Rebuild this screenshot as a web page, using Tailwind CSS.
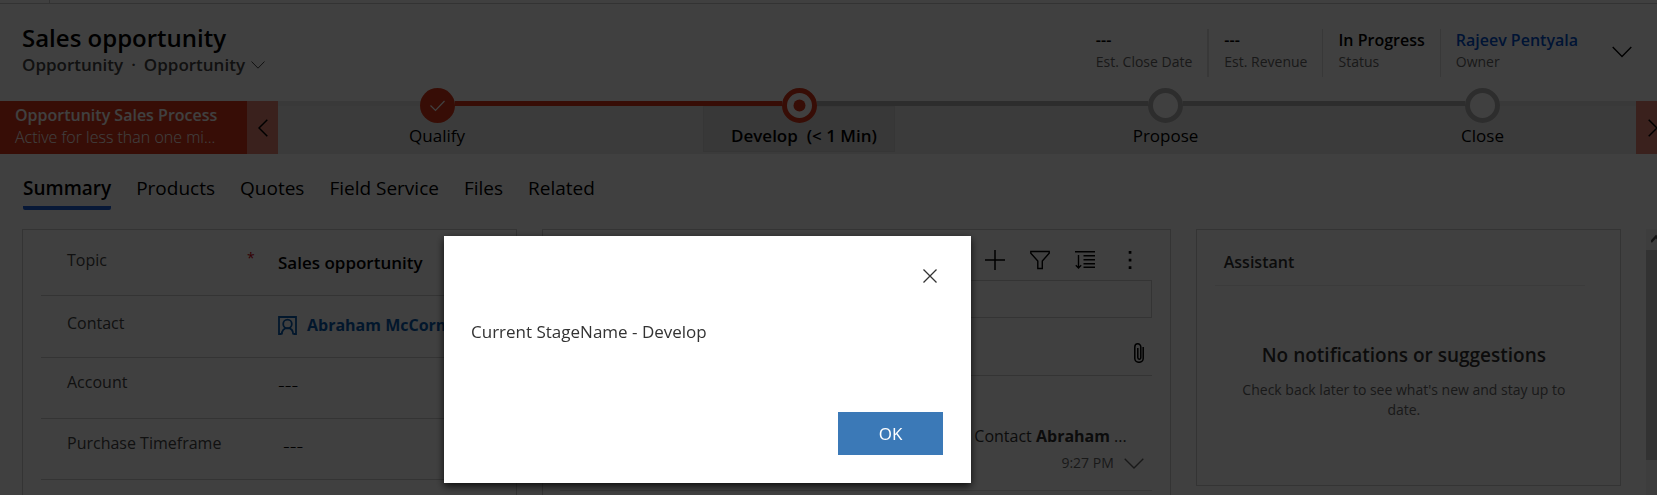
<!DOCTYPE html>
<html lang="en">
<head>
<meta charset="utf-8">
<title>Sales opportunity</title>
<script src="https://cdn.jsdelivr.net/npm/@tailwindcss/browser@4"></script>
</head>
<body class="h-screen overflow-hidden bg-white font-['Open_Sans','Noto_Sans',sans-serif] text-base text-black">
<div class="flex h-full flex-col overflow-hidden">
  <div class="h-1 shrink-0 border-b border-[#cccccc]"><div class="h-full w-[50px] border-r border-[#cccccc]"></div></div>

  <header class="flex h-[97px] shrink-0 items-start justify-between pl-[22px] pr-[25px]">
    <div class="pt-4">
      <h1 class="text-2xl/9 font-semibold">Sales opportunity</h1>
      <div class="flex items-center text-[17px]/[18px] font-semibold text-[#444444]">
        <span>Opportunity</span><span class="px-2">·</span>
        <button type="button" class="flex items-center gap-[6px] font-semibold">Opportunity
          <svg class="h-2 w-[14px]" viewBox="0 0 14 8" fill="none" stroke="currentColor"><path d="M.5.5 7 7.2 13.5.5"/></svg>
        </button>
      </div>
    </div>
    <div class="flex pt-[25px]">
      <dl class="flex h-12">
        <div class="flex flex-col-reverse justify-end border-r-2 border-[#dddddd] pr-[15px]"><dt class="text-sm/[22px] text-[#666666]">Est. Close Date</dt><dd class="text-base/[22px] font-semibold">---</dd></div>
        <div class="flex flex-col-reverse justify-end border-r border-[#dddddd] px-[15px]"><dt class="text-sm/[22px] text-[#666666]">Est. Revenue</dt><dd class="text-base/[22px] font-semibold">---</dd></div>
        <div class="flex flex-col-reverse justify-end border-r border-[#dddddd] px-[15px]"><dt class="text-sm/[22px] text-[#666666]">Status</dt><dd class="text-base/[22px] font-semibold">In Progress</dd></div>
        <div class="flex flex-col-reverse justify-end pl-[15px]"><dt class="text-sm/[22px] text-[#666666]">Owner</dt><dd class="text-base/[22px] font-semibold"><a href="#" class="text-[#0050d0]">Rajeev Pentyala</a></dd></div>
      </dl>
      <button type="button" aria-label="Expand header" class="ml-[34px] mt-[13px] h-5">
        <svg class="h-3 w-5" viewBox="0 0 20 12" fill="none" stroke="currentColor" stroke-width="1.4"><path d="M.7 1 10 10.5 19.3 1"/></svg>
      </button>
    </div>
  </header>

  <section class="flex h-[53px] shrink-0 bg-[#ececec]" aria-label="Business process">
    <div class="w-[247px] shrink-0 bg-[#dc3618] pl-[15px] text-[#ffffff]">
      <div class="whitespace-nowrap pt-[2px] text-base/6 font-semibold">Opportunity Sales Process</div>
      <div class="text-base/5 font-light">Active for less than one mi...</div>
    </div>
    <button type="button" aria-label="Previous stage" class="flex w-[31px] shrink-0 items-center justify-center bg-[#e88474]">
      <svg class="h-[18px] w-[10px]" viewBox="0 0 10 18" fill="none" stroke="currentColor" stroke-width="1.5"><path d="M9.3.7 1 9l8.3 8.3"/></svg>
    </button>
    <ol class="grid flex-1 grid-cols-[318fr_406fr_327fr_307fr] text-[17px]/6">
      <li class="flex flex-col items-center">
        <div class="flex h-[5px] w-full items-center"><div class="h-[5px] flex-1 bg-[#e4e4e4]"></div>
          <svg class="mt-1 size-[35px] shrink-0" viewBox="0 0 35 35"><circle cx="17.500" cy="17.500" r="17.500" fill="#dc3618"/><path d="m10.500 17.500 5 5 9-9.500" fill="none" stroke="#fff" stroke-width="1.200"/></svg>
          <div class="h-[5px] flex-1 bg-[#dc3618]"></div></div>
        <div class="pt-[18px]">Qualify</div>
      </li>
      <li class="flex flex-col items-center">
        <div class="z-10 flex h-[5px] w-full items-center"><div class="h-[5px] flex-1 bg-[#dc3618]"></div>
          <svg class="mt-1 size-[35px] shrink-0" viewBox="0 0 35 35"><circle cx="17.500" cy="17.500" r="15" fill="#fff" stroke="#dc3618" stroke-width="5"/><circle cx="17.500" cy="17.500" r="6" fill="#dc3618"/></svg>
          <div class="h-[5px] flex-1 bg-[#b4b4b4]"></div></div>
        <div class="h-[46px] w-[192px] border border-[#d8d8d8] bg-[#e0e0e0] pl-[27px] pt-[17px] font-semibold whitespace-pre">Develop  (&lt; 1 Min)</div>
      </li>
      <li class="flex flex-col items-center">
        <div class="flex h-[5px] w-full items-center"><div class="h-[5px] flex-1 bg-[#b4b4b4]"></div>
          <svg class="mt-1 size-[35px] shrink-0" viewBox="0 0 35 35"><circle cx="17.500" cy="17.500" r="15" fill="#fff" stroke="#b4b4b4" stroke-width="5"/></svg>
          <div class="h-[5px] flex-1 bg-[#b4b4b4]"></div></div>
        <div class="pt-[18px]">Propose</div>
      </li>
      <li class="flex flex-col items-center">
        <div class="flex h-[5px] w-full items-center"><div class="h-[5px] flex-1 bg-[#b4b4b4]"></div>
          <svg class="mt-1 size-[35px] shrink-0" viewBox="0 0 35 35"><circle cx="17.500" cy="17.500" r="15" fill="#fff" stroke="#b4b4b4" stroke-width="5"/></svg>
          <div class="h-[5px] flex-1 bg-[#e4e4e4]"></div></div>
        <div class="pt-[18px]">Close</div>
      </li>
    </ol>
    <button type="button" aria-label="Next stage" class="flex w-[21px] shrink-0 items-center bg-[#e88474] pl-3">
      <svg class="h-[18px] w-[10px] shrink-0" viewBox="0 0 10 18" fill="none" stroke="currentColor" stroke-width="1.5"><path d="M.7.7 9 9 .7 17.300"/></svg>
    </button>
  </section>

  <nav class="flex h-[75px] shrink-0 items-start gap-[25px] pl-[23px] pt-[18px] text-[19px]/8">
    <a href="#" class="h-[38px] rounded-b-[2px] border-b-4 border-[#1e5fdc] font-semibold">Summary</a>
    <a href="#">Products</a><a href="#">Quotes</a><a href="#">Field Service</a><a href="#">Files</a><a href="#">Related</a>
  </nav>

  <main class="flex min-h-0 flex-1 items-start pl-[22px]">
    <div class="grid h-full flex-1 grid-cols-[495fr_628fr_425fr] gap-[25px] pr-[25px]">
      <section class="h-[300px] border border-[#cfcfcf] pl-[18px]">
        <div class="flex h-[66px] border-b border-[#cfcfcf] pl-[26px] pt-[18px] text-base/6"><span class="w-[180px] text-[#444444]">Topic</span><span class="w-[31px] text-sm/5 text-[#d00010]">*</span><span class="pt-[3px] text-[17px] font-semibold">Sales opportunity</span></div>
        <div class="flex h-[62px] items-start border-b border-[#cfcfcf] pl-[26px] pt-[15px] text-base/6"><span class="w-[211px] text-[#444444]">Contact</span>
          <a href="#" class="flex items-center gap-[10px] whitespace-nowrap pt-[2px] font-bold text-[#0b5cb0]">
            <svg class="size-[19px]" viewBox="0 0 19 19" fill="none" stroke="currentColor" stroke-width="1.800"><path d="M3.500 18H1V1h17v17h-2.500"/><circle cx="9.500" cy="8" r="4.300"/><path d="M3.800 18.500c0-4 2-6.300 5.700-6.300s5.700 2.300 5.700 6.300"/></svg>Abraham McCormick</a></div>
        <div class="flex h-[61px] border-b border-[#cfcfcf] pl-[26px] pt-3 text-base/6"><span class="w-[211px] text-[#444444]">Account</span><span class="pt-[2px] text-[21px] font-light">---</span></div>
        <div class="flex h-[61px] border-b border-[#cfcfcf] pl-[26px] pt-3 text-base/6"><span class="w-[216px] text-[#444444]">Purchase Timeframe</span><span class="pt-[2px] text-[21px] font-light">---</span></div>
      </section>

      <section class="h-[300px] border border-[#cfcfcf] pl-[17px] pr-[18px] pt-5">
        <div class="flex items-center justify-end gap-[25px]">
          <button type="button" aria-label="Add"><svg class="size-5" viewBox="0 0 20 20" stroke="currentColor" stroke-width="1.500"><path d="M10 0v20M0 10h20"/></svg></button>
          <button type="button" aria-label="Filter"><svg class="size-5" viewBox="0 0 20 20" fill="none" stroke="currentColor" stroke-width="1.400"><path d="M.800 1.500h18.400v1.700L12.300 11v7.500H7.800V11L.800 3.200z"/></svg></button>
          <button type="button" aria-label="Sort"><svg class="size-5" viewBox="0 0 20 20" fill="none" stroke="currentColor" stroke-width="1.400"><path d="M0 1.800h20M8.500 5.800H20M8.500 9.800H20M8.500 13.800H20M8.500 17.300H20M3.500 5v13M.800 15.300l2.700 2.700 2.700-2.700"/></svg></button>
          <button type="button" aria-label="More" class="mr-3"><svg class="size-5" viewBox="0 0 20 20" fill="currentColor"><path d="M8.700 1h2.700v2.700H8.700zM8.700 8.700h2.700v2.700H8.700zM8.700 16.300h2.700V19H8.700z"/></svg></button>
        </div>
        <input type="text" aria-label="Search timeline" class="mt-[10px] block h-[38px] w-full border border-[#cfcfcf]">
        <div class="flex h-[58px] items-end justify-end border-b border-[#cfcfcf] pb-3 pr-2">
          <button type="button" aria-label="Attach"><svg class="h-5 w-[10px]" viewBox="0 0 10 20" fill="none" stroke="currentColor" stroke-width="1.500"><path d="M9.200 4v11.500a4.200 3.800 0 0 1-8.400 0V4a3 3.200 0 0 1 6 0v10.500a1.500 1.700 0 0 1-3 0V5"/></svg></button>
        </div>
        <div class="flex h-[115px] flex-col items-end border-b border-[#e0e0e0] pt-12">
          <p class="pr-[25px] text-base/6 text-[#333333]">Contact <b class="font-bold">Abraham</b> ...</p>
          <div class="flex items-center gap-[10px] pr-2 pt-[3px] text-sm/6 text-[#666666]">9:27 PM
            <button type="button" aria-label="Expand activity"><svg class="h-[11px] w-5" viewBox="0 0 20 11" fill="none" stroke="currentColor" stroke-width="1.400"><path d="M.7.7 10 10 19.300.7"/></svg></button></div>
        </div>
      </section>

      <section class="h-[257px] border border-[#cfcfcf] pl-[18px] pr-[35px]">
        <h2 class="h-[56px] border-b border-[#ececec] pl-[9px] pt-5 text-base/6 font-semibold text-[#333333]">Assistant</h2>
        <div class="pl-5 pr-3 pt-[55px] text-center">
          <h3 class="whitespace-nowrap text-[19px]/7 font-semibold text-[#333333]">No notifications or suggestions</h3>
          <p class="pt-[11px] text-sm/5 text-[#666666]">Check back later to see what's new and stay up to date.</p>
        </div>
      </section>
    </div>
    <div class="h-full w-[11px] overflow-hidden bg-[#f1f1f1]" aria-hidden="true">
      <svg class="ml-[5px] h-[21px] w-[10px]" viewBox="0 0 10 21" fill="none" stroke="#505050" stroke-width="2.500"><path d="M0 13l5-5.500 5 5.500"/></svg>
      <div class="h-[210px] bg-[#c8c8c8]"></div>
    </div>
  </main>
</div>

<div class="fixed inset-0 z-20 bg-black/75">
  <div role="dialog" aria-modal="true" aria-labelledby="dialog-text" class="absolute left-[444px] top-[236px] flex w-[527px] flex-col bg-white pb-7 pl-[27px] pr-7 shadow-[0_3px_8px_rgba(0,0,0,0.8)]">
    <button type="button" aria-label="Close" class="mr-[6px] mt-[33px] self-end text-[#333333]"><svg class="size-[14px]" viewBox="0 0 14 14" stroke="currentColor" stroke-width="1.300"><path d="m.5.5 13 13M13.500.5l-13 13"/></svg></button>
    <p id="dialog-text" class="pt-[37px] text-[17px]/6 text-[#333333]">Current StageName - Develop</p>
    <button type="button" class="mt-[68px] h-[43px] w-[105px] self-end bg-[#3b79b7] text-[17px]/6 text-white">OK</button>
  </div>
</div>
</body>
</html>
